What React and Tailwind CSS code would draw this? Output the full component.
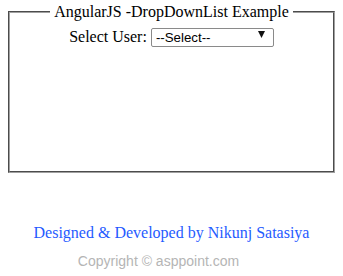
export default function App() {
  return (
    <div className="min-h-screen bg-white px-2 pt-[3px] font-['Liberation_Serif',serif] text-black">
      <fieldset className="h-[170px] border-2 border-[#a0a0a0] px-[10px] [border-style:groove]">
        <legend className="mx-auto px-[4px] text-[16px] leading-[18px]">AngularJS -DropDownList Example</legend>
        <div className="flex items-center justify-center gap-[4px] pt-[4px]">
          <label className="text-[16px] leading-[18px]">Select User:</label>
          <div className="relative">
            <select className="h-[19px] w-[123px] appearance-none rounded-[2px] border border-[#8a8a8a] bg-white pl-[4px] font-['Liberation_Sans',sans-serif] text-[13.3px] leading-[17px] text-black">
              <option>--Select--</option>
            </select>
            <svg className="pointer-events-none absolute right-[9px] top-[6px]" width="7" height="7" viewBox="0 0 7 7">
              <path d="M0 0H7L3.5 7Z" fill="#111" />
            </svg>
          </div>
        </div>
      </fieldset>
      <div className="mt-[51px] text-center text-[16px] leading-[18px] text-[#1f5bff]">
        Designed &amp; Developed by Nikunj Satasiya
      </div>
      <div className="mt-[11px] pr-[26px] text-center font-['Liberation_Sans',sans-serif] text-[14px] leading-[16px] text-[#b5b5b5]">
        Copyright © asppoint.com
      </div>
    </div>
  );
}
